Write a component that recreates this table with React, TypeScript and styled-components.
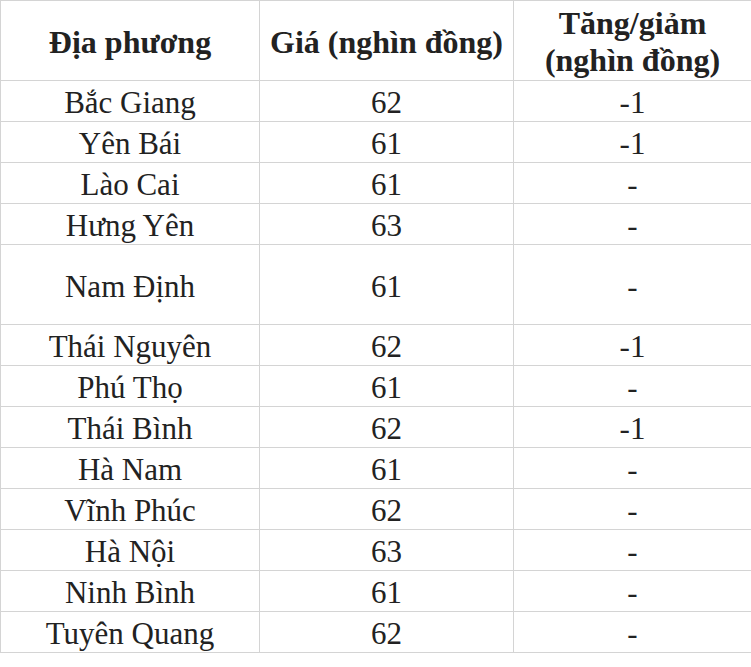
import React from "react";
import styled, { createGlobalStyle } from "styled-components";

const GlobalStyle = createGlobalStyle`
  html, body {
    margin: 0;
    padding: 0;
    background: #ffffff;
    overflow: hidden;
  }
  body {
    font-family: "Liberation Serif", "Times New Roman", Times, serif;
    color: #222222;
  }
`;

const Grid = styled.div`
  display: grid;
  grid-template-columns: 259px 254px 238px;
  width: 752px;
  box-sizing: border-box;
  border-top: 1px solid #d4d4d4;
  border-left: 1px solid #d4d4d4;
`;

const Cell = styled.div<{ $head?: boolean; $h: number }>`
  box-sizing: border-box;
  height: ${(p) => p.$h}px;
  border-right: 1px solid #d4d4d4;
  border-bottom: 1px solid #d4d4d4;
  display: flex;
  align-items: center;
  justify-content: center;
  text-align: center;
  padding: 3px 6px 0;
  font-family: "Liberation Serif", "Times New Roman", Times, serif;
  font-size: ${(p) => (p.$head ? 32 : 31)}px;
  line-height: 37px;
  font-weight: ${(p) => (p.$head ? 700 : 400)};
  color: #222222;
`;

type Row = { name: string; price: string; change: string; tall?: boolean };

const rows: Row[] = [
  { name: "Bắc Giang", price: "62", change: "-1" },
  { name: "Yên Bái", price: "61", change: "-1" },
  { name: "Lào Cai", price: "61", change: "-" },
  { name: "Hưng Yên", price: "63", change: "-" },
  { name: "Nam Định", price: "61", change: "-", tall: true },
  { name: "Thái Nguyên", price: "62", change: "-1" },
  { name: "Phú Thọ", price: "61", change: "-" },
  { name: "Thái Bình", price: "62", change: "-1" },
  { name: "Hà Nam", price: "61", change: "-" },
  { name: "Vĩnh Phúc", price: "62", change: "-" },
  { name: "Hà Nội", price: "63", change: "-" },
  { name: "Ninh Bình", price: "61", change: "-" },
  { name: "Tuyên Quang", price: "62", change: "-" },
];

export default function App() {
  return (
    <>
      <GlobalStyle />
      <Grid>
        <Cell $head $h={80}>Địa phương</Cell>
        <Cell $head $h={80}>Giá (nghìn đồng)</Cell>
        <Cell $head $h={80}>Tăng/giảm (nghìn đồng)</Cell>
        {rows.map((r) => (
          <React.Fragment key={r.name}>
            <Cell $h={r.tall ? 80 : 41}>{r.name}</Cell>
            <Cell $h={r.tall ? 80 : 41}>{r.price}</Cell>
            <Cell $h={r.tall ? 80 : 41}>{r.change}</Cell>
          </React.Fragment>
        ))}
      </Grid>
    </>
  );
}
